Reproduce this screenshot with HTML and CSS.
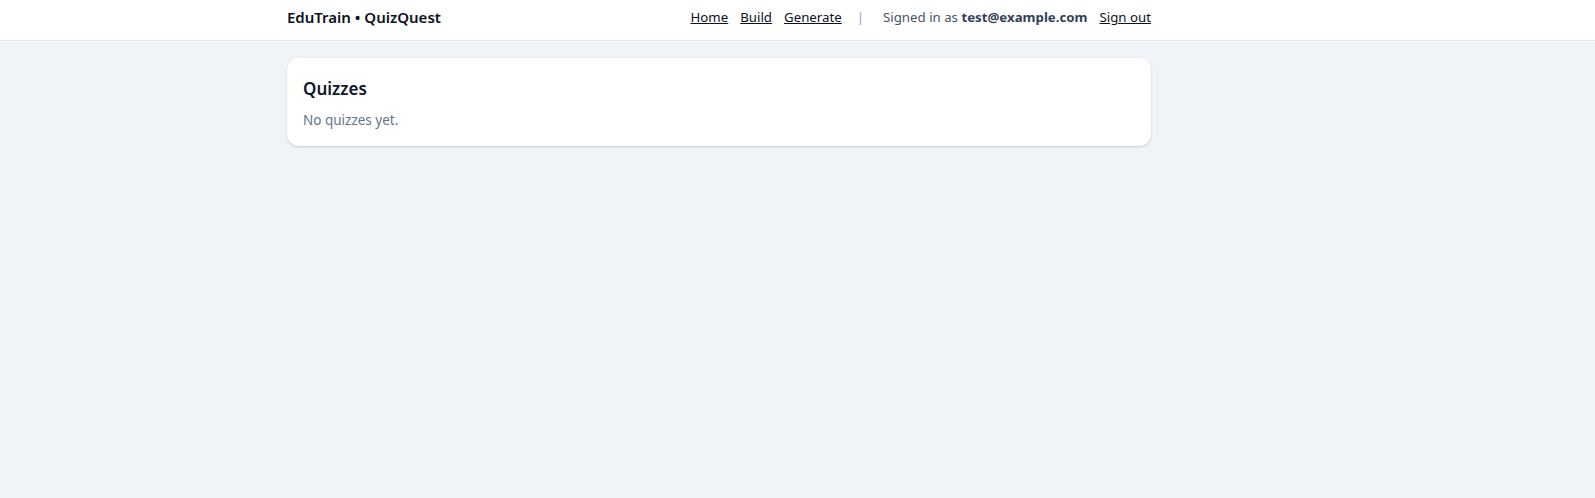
FILE: index.html
```html
<!DOCTYPE html>
<html lang="en">
<head>
<meta charset="utf-8">
<title>EduTrain • QuizQuest</title>
<link rel="stylesheet" href="styles.css">
</head>
<body>
<header class="topbar">
  <div class="wrap topbar-inner">
    <div class="brand">EduTrain • QuizQuest</div>
    <nav class="nav">
      <a href="#">Home</a>
      <a href="#">Build</a>
      <a href="#">Generate</a>
      <span class="sep">|</span>
      <span class="who">Signed in as <strong>test@example.com</strong></span>
      <a href="#">Sign out</a>
    </nav>
  </div>
</header>
<main class="wrap main">
  <section class="card">
    <h2 class="card-title">Quizzes</h2>
    <p class="muted">No quizzes yet.</p>
  </section>
</main>
</body>
</html>
```

FILE: styles.css
```css
* { box-sizing: border-box; }
html, body { margin: 0; padding: 0; }
body {
  background: #f0f4f8;
  font-family: "Noto Sans", "Open Sans", sans-serif;
  color: #0f172a;
  min-height: 100vh;
}
.wrap {
  width: 864px;
  margin-left: 287px;
}
.topbar {
  background: #ffffff;
  border-bottom: 1px solid #e2e8f0;
}
.topbar-inner {
  height: 40px;
  padding-bottom: 6px;
  display: flex;
  align-items: center;
  justify-content: space-between;
}
.brand {
  font-size: 15px;
  font-weight: 600;
  color: #0b1120;
}
.nav {
  display: flex;
  align-items: center;
  gap: 12px;
  font-size: 13.25px;
}
.nav a {
  color: #0b1120;
  text-decoration: underline;
}
.sep {
  color: #94a3b8;
  margin: 0 7px 0 3px;
}
.who {
  color: #475569;
}
.who strong {
  color: #334155;
  font-weight: 700;
}
.main {
  padding-top: 17px;
}
.card {
  background: #ffffff;
  border-radius: 12px;
  padding: 16px;
  box-shadow: 0 1px 3px rgba(15, 23, 42, 0.12), 0 1px 2px rgba(15, 23, 42, 0.06);
}
.card-title {
  margin: 0 0 7px;
  padding-top: 1px;
  font-size: 17px;
  line-height: 28px;
  font-weight: 600;
}
.muted {
  margin: 0;
  font-size: 13.5px;
  line-height: 20px;
  color: #64748b;
}
```
